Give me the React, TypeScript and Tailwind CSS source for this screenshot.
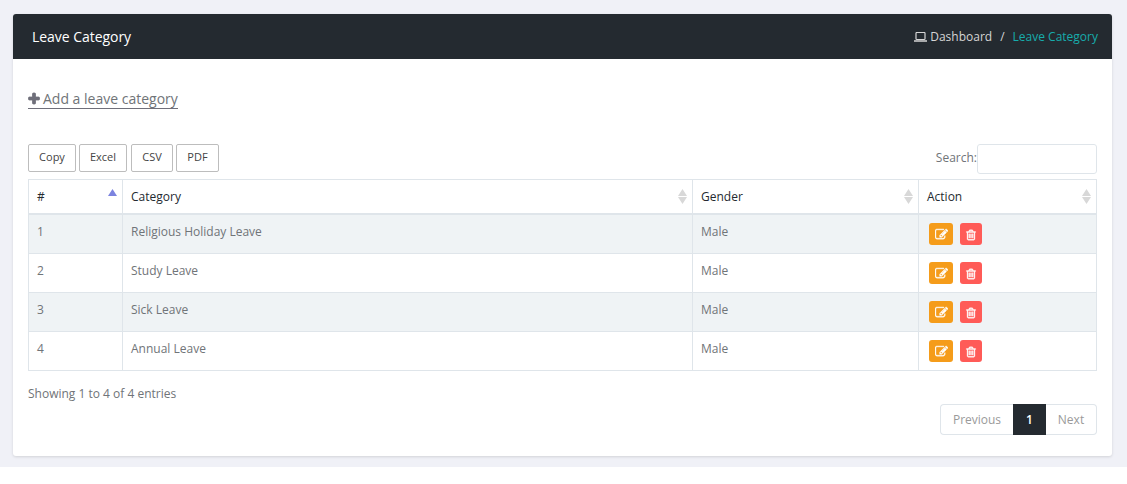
import React from 'react';

const PLUS =
  'M1600 736v192q0 40-28 68t-68 28h-416v416q0 40-28 68t-68 28h-192q-40 0-68-28t-28-68v-416h-416q-40 0-68-28t-28-68v-192q0-40 28-68t68-28h416v-416q0-40 28-68t68-28h192q40 0 68 28t28 68v416h416q40 0 68 28t28 68z';
const EDIT =
  'M888 1184l116-116-152-152-116 116v56h96v96h56zm440-720q-16-16-33 1l-350 350q-17 17-1 33t33-1l350-350q17-17 1-33zm80 594v190q0 119-84.5 203.5t-203.5 84.5h-832q-119 0-203.5-84.5t-84.5-203.5v-832q0-119 84.5-203.5t203.5-84.5h832q63 0 117 25 15 7 18 23 3 17-9 29l-49 49q-14 14-32 8-23-6-45-6h-832q-66 0-113 47t-47 113v832q0 66 47 113t113 47h832q66 0 113-47t47-113v-126q0-13 9-22l64-64q15-15 35-7t20 29zm-96-738l288 288-672 672h-288v-288zm444 132l-92 92-288-288 92-92q28-28 68-28t68 28l152 152q28 28 28 68t-28 68z';
const TRASH =
  'M704 736v576q0 14-9 23t-23 9h-64q-14 0-23-9t-9-23v-576q0-14 9-23t23-9h64q14 0 23 9t9 23zm256 0v576q0 14-9 23t-23 9h-64q-14 0-23-9t-9-23v-576q0-14 9-23t23-9h64q14 0 23 9t9 23zm256 0v576q0 14-9 23t-23 9h-64q-14 0-23-9t-9-23v-576q0-14 9-23t23-9h64q14 0 23 9t9 23zm128 724v-948h-896v948q0 22 7 40.5t14.5 27 10.5 8.5h832q3 0 10.5-8.5t14.5-27 7-40.5zm-672-1076h448l-48-117q-7-9-17-11h-317q-10 2-17 11zm928 32v64q0 14-9 23t-23 9h-96v948q0 83-47 143.5t-113 60.5h-832q-66 0-113-58.5t-47-141.5v-952h-96q-14 0-23-9t-9-23v-64q0-14 9-23t23-9h309l70-167q15-37 54-63t79-26h320q40 0 79 26t54 63l70 167h309q14 0 23 9t9 23z';

function Glyph({ d, className }: { d: string; className: string }) {
  return (
    <svg viewBox="0 0 1792 1792" fill="currentColor" stroke="currentColor" className={className}>
      <path d={d} />
    </svg>
  );
}

function Laptop() {
  return (
    <svg viewBox="0 0 13 10" className="mr-[3px] h-[10px] w-[13px]" fill="none" stroke="currentColor">
      <rect x="2" y="0.5" width="9" height="7" rx="0.8" strokeWidth="1.2" />
      <path d="M0 9h13" strokeWidth="1.3" />
    </svg>
  );
}

function SortIcon({ active }: { active?: boolean }) {
  return (
    <svg viewBox="0 0 9 15" className="mt-[9px] mr-[5px] h-[15px] w-[9px]">
      <path d="M4.5 0L9 7H0z" fill={active ? '#7c83df' : '#d8d8d8'} />
      {!active && <path d="M0 8h9L4.5 15z" fill="#d8d8d8" />}
    </svg>
  );
}

const exportButtons = [
  { label: 'Copy', className: 'mr-[3px] w-12' },
  { label: 'Excel', className: 'mr-1 w-12' },
  { label: 'CSV', className: 'mr-[3px] w-[42px]' },
  { label: 'PDF', className: 'w-[43px]' },
];

const categories = ['Religious Holiday Leave', 'Study Leave', 'Sick Leave', 'Annual Leave'];

const columns = 'grid grid-cols-[94px_570px_226px_178px] border-r border-[#dfe5ea]';
const headCell = 'flex justify-between border-l border-[#dfe5ea] pl-2';
const cell = 'border-l border-[#dfe5ea] pl-2 pt-2';

export default function App() {
  return (
    <div className="h-[484px] w-[1127px] bg-white font-['Open_Sans',sans-serif] text-[12px] leading-[18px] text-[#707478]">
      <div className="h-[467px] bg-[#f0f1f7] pl-[13px] pt-[14px]">
        <main className="h-[442px] w-[1099px] overflow-hidden rounded-[3px] bg-white shadow-[0_1px_3px_rgba(0,0,0,0.13)]">
          <header className="flex h-[45px] items-center justify-between bg-[#242a30] pl-[19px] pr-[14px]">
            <h1 className="text-[14px] tracking-[-0.04px] text-white">Leave Category</h1>
            <nav className="flex items-center text-[#d5d5d5]">
              <Laptop />
              <span>Dashboard</span>
              <span className="px-2">/</span>
              <span className="text-[#17acac]">Leave Category</span>
            </nav>
          </header>

          <div className="px-[15px] pt-[31px]">
            <a className="flex h-[19px] w-[150px] items-center border-b border-[#6f6f7a] text-[14px] whitespace-nowrap">
              <Glyph d={PLUS} className="mr-[2px] -ml-px h-[14px] w-[14px] shrink-0 stroke-[100] text-[#6f6f7a]" />
              Add a leave category
            </a>

            <div className="mt-[35px] flex h-[35px] items-start justify-between">
              <div className="flex">
                {exportButtons.map((b) => (
                  <button
                    key={b.label}
                    className={`${b.className} flex h-7 items-center justify-center rounded-[2px] border border-[#bdbdbd] pb-[2px] text-[11px] text-[#444]`}
                  >
                    {b.label}
                  </button>
                ))}
              </div>
              <label className="flex">
                <span className="pt-[5px]">Search:</span>
                <input className="h-[30px] w-[120px] rounded-[3px] border border-[#dfe5ea] px-2 outline-none" />
              </label>
            </div>

            <div className="border-t border-[#dfe5ea]">
              <div className={`${columns} h-[35px] border-b-2 text-[#242a30]`}>
                {['#', 'Category', 'Gender', 'Action'].map((h, i) => (
                  <div key={h} className={headCell}>
                    <span className="pt-2">{h}</span>
                    <SortIcon active={i === 0} />
                  </div>
                ))}
              </div>
              {categories.map((name, i) => (
                <div key={name} className={`${columns} h-[39px] border-b ${i % 2 === 0 ? 'bg-[#eff3f5]' : 'bg-white'}`}>
                  <div className={cell}>{i + 1}</div>
                  <div className={cell}>{name}</div>
                  <div className={cell}>Male</div>
                  <div className="flex gap-[7px] border-l border-[#dfe5ea] pl-[10px] pt-2">
                    <button className="flex h-[22px] w-6 items-center justify-center rounded-[3px] bg-[#f59c1a] pt-px text-white">
                      <Glyph d={EDIT} className="h-[13px] w-[13px] stroke-[50]" />
                    </button>
                    <button className="flex h-[22px] w-[22px] items-center justify-center rounded-[3px] bg-[#ff5b57] pt-[2px] text-white">
                      <Glyph d={TRASH} className="h-3 w-3 stroke-[60]" />
                    </button>
                  </div>
                </div>
              ))}
            </div>

            <p className="mt-[14px]">Showing 1 to 4 of 4 entries</p>
            <div className="mt-px flex justify-end text-[#9a9a9a]">
              <div className="flex h-[31px] w-[73px] items-center justify-center rounded-l-[4px] border border-r-0 border-[#dfe5ea]">
                Previous
              </div>
              <div className="flex h-[31px] w-[33px] items-center justify-center bg-[#242a30] font-semibold text-white">1</div>
              <div className="flex h-[31px] w-[51px] items-center justify-center rounded-r-[4px] border border-l-0 border-[#dfe5ea]">
                Next
              </div>
            </div>
          </div>
        </main>
      </div>
    </div>
  );
}
